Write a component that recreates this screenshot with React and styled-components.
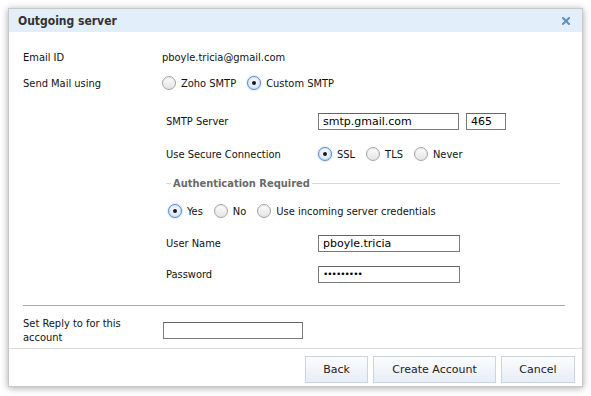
import React, { useState } from 'react'
import styled, { createGlobalStyle } from 'styled-components'

const GlobalStyle = createGlobalStyle`
  html, body {
    margin: 0;
    padding: 0;
    background: #ffffff;
  }
  body {
    font-family: 'DejaVu Sans Condensed', 'DejaVu Sans', sans-serif;
    font-size: 11px;
    color: #111;
  }
`

const Radio = ({ checked, label, onClick }) => (
  <RadioLabel onClick={onClick}>
    <RadioCircle checked={checked}>{checked && <RadioDot />}</RadioCircle>
    {label}
  </RadioLabel>
)

const App = () => {
  const [mode, setMode] = useState('custom')
  const [secure, setSecure] = useState('ssl')
  const [auth, setAuth] = useState('yes')

  return (
    <>
      <GlobalStyle />
      <Dialog>
        <Header>
          <Title>Outgoing server</Title>
          <Close>
            <svg width="8" height="8" viewBox="0 0 8 8">
              <path d="M1 1 L7 7 M7 1 L1 7" stroke="#5a8fc2" strokeWidth="2" strokeLinecap="square" />
            </svg>
          </Close>
        </Header>
        <Body>
          <Row top={15}>
            <Label>Email ID</Label>
            <Value>pboyle.tricia@gmail.com</Value>
          </Row>
          <Row top={6}>
            <Label>Send Mail using</Label>
            <RadioGroup>
              <Radio label="Zoho SMTP" checked={mode === 'zoho'} onClick={() => setMode('zoho')} />
              <Radio label="Custom SMTP" checked={mode === 'custom'} onClick={() => setMode('custom')} />
            </RadioGroup>
          </Row>
          <Inner>
            <Row top={18}>
              <InnerLabel>SMTP Server</InnerLabel>
              <TextBox width={141} defaultValue="smtp.gmail.com" />
              <TextBox width={40} defaultValue="465" gap={7} />
            </Row>
            <Row top={13}>
              <InnerLabel>Use Secure Connection</InnerLabel>
              <RadioGroup>
                <Radio label="SSL" checked={secure === 'ssl'} onClick={() => setSecure('ssl')} />
                <Radio label="TLS" checked={secure === 'tls'} onClick={() => setSecure('tls')} />
                <Radio label="Never" checked={secure === 'never'} onClick={() => setSecure('never')} />
              </RadioGroup>
            </Row>
            <Legend>
              <LegendText>Authentication Required</LegendText>
            </Legend>
            <Row top={8}>
              <RadioGroup indent={2}>
                <Radio label="Yes" checked={auth === 'yes'} onClick={() => setAuth('yes')} />
                <Radio label="No" checked={auth === 'no'} onClick={() => setAuth('no')} />
                <Radio label="Use incoming server credentials" checked={auth === 'incoming'} onClick={() => setAuth('incoming')} />
              </RadioGroup>
            </Row>
            <Row top={12}>
              <InnerLabel>User Name</InnerLabel>
              <TextBox width={142} defaultValue="pboyle.tricia" />
            </Row>
            <Row top={11}>
              <InnerLabel>Password</InnerLabel>
              <TextBox width={142} type="password" defaultValue="pboyletri" secret />
            </Row>
          </Inner>
          <Separator />
          <ReplyRow>
            <ReplyLabel>Set Reply to for this account</ReplyLabel>
            <TextBox width={140} gapTop={5} />
          </ReplyRow>
        </Body>
        <Footer>
          <Button width={63}>Back</Button>
          <Button width={123}>Create Account</Button>
          <Button width={74}>Cancel</Button>
        </Footer>
      </Dialog>
    </>
  )
}

const Dialog = styled.div`
  margin: 8px;
  width: 573px;
  height: 377px;
  border: 1px solid #c8c8c8;
  box-shadow: 0 1px 7px rgba(0, 0, 0, 0.35);
  background: #fff;
  display: flex;
  flex-direction: column;
`

const Header = styled.div`
  height: 23px;
  background: #e2eef9;
  display: flex;
  align-items: center;
  justify-content: space-between;
  padding: 0 12px 0 9px;
`

const Title = styled.div`
  font-weight: bold;
  font-size: 12px;
  color: #333;
`

const Close = styled.div`
  display: flex;
  align-items: center;
  cursor: pointer;
`

const Body = styled.div`
  height: 317px;
  padding: 0 17px 0 14px;
  border-bottom: 1px solid #dcdcdc;
  box-sizing: border-box;
  display: flex;
  flex-direction: column;
`

const Row = styled.div`
  height: 20px;
  margin-top: ${p => p.top || 0}px;
  display: flex;
  align-items: center;
`

const Label = styled.div`
  width: 139px;
  flex-shrink: 0;
`

const Value = styled.div``

const Inner = styled.div`
  padding-left: 143px;
  display: flex;
  flex-direction: column;
`

const InnerLabel = styled.div`
  width: 152px;
  flex-shrink: 0;
`

const RadioGroup = styled.div`
  display: flex;
  align-items: center;
  gap: 11px;
  margin-left: ${p => p.indent || 0}px;
`

const RadioLabel = styled.label`
  display: flex;
  align-items: center;
  gap: 5px;
  cursor: pointer;
`

const RadioCircle = styled.span`
  width: 12px;
  height: 12px;
  border-radius: 50%;
  border: 1px solid ${p => (p.checked ? '#5c8dc6' : '#a4a4a4')};
  background: ${p =>
    p.checked
      ? 'radial-gradient(circle at 50% 40%, #ffffff 0%, #d9e8f8 60%, #a9c7ea 100%)'
      : 'linear-gradient(#fdfdfd, #e4e4e4)'};
  box-shadow: ${p => (p.checked ? '0 0 2px rgba(70, 130, 200, 0.6)' : 'inset 0 1px 1px rgba(0,0,0,0.08)')};
  display: flex;
  align-items: center;
  justify-content: center;
`

const RadioDot = styled.span`
  width: 4px;
  height: 4px;
  border-radius: 50%;
  background: #1a1a1a;
`

const TextBox = styled.input`
  width: ${p => p.width}px;
  height: 17px;
  margin-left: ${p => p.gap || 0}px;
  margin-top: ${p => p.gapTop || 0}px;
  box-sizing: border-box;
  border: 1px solid #7a7a7a;
  border-top-color: #666;
  padding: 0 4px;
  font-family: 'DejaVu Sans', sans-serif;
  font-size: ${p => (p.secret ? 9 : 11)}px;
  letter-spacing: ${p => (p.secret ? '-1px' : 'normal')};
  color: #000;
  outline: none;
`

const Legend = styled.div`
  margin-top: 9px;
  height: 20px;
  display: flex;
  align-items: center;
  &::before {
    content: '';
    width: 5px;
    border-top: 1px solid #d8d8d8;
  }
  &::after {
    content: '';
    flex: 1;
    margin-right: 5px;
    border-top: 1px solid #d8d8d8;
  }
`

const LegendText = styled.span`
  font-weight: bold;
  color: #6a6a6a;
  padding: 0 2px;
`

const Separator = styled.div`
  margin-top: 21px;
  border-top: 1px solid #a8a8a8;
`

const ReplyRow = styled.div`
  margin-top: 11px;
  display: flex;
  align-items: flex-start;
`

const ReplyLabel = styled.div`
  width: 112px;
  margin-right: 28px;
  line-height: 14px;
`

const Footer = styled.div`
  flex: 1;
  display: flex;
  justify-content: flex-end;
  align-items: flex-start;
  gap: 4px;
  padding: 7px 7px 0 0;
`

const Button = styled.button`
  width: ${p => p.width}px;
  height: 27px;
  margin-right: 1px;
  border: 1px solid #c9d5e6;
  background: linear-gradient(#fbfcfe, #e7edf6);
  font-family: 'DejaVu Sans', sans-serif;
  font-size: 11px;
  color: #222;
  cursor: pointer;
  &:last-child {
    margin-right: 0;
  }
`

export default App
